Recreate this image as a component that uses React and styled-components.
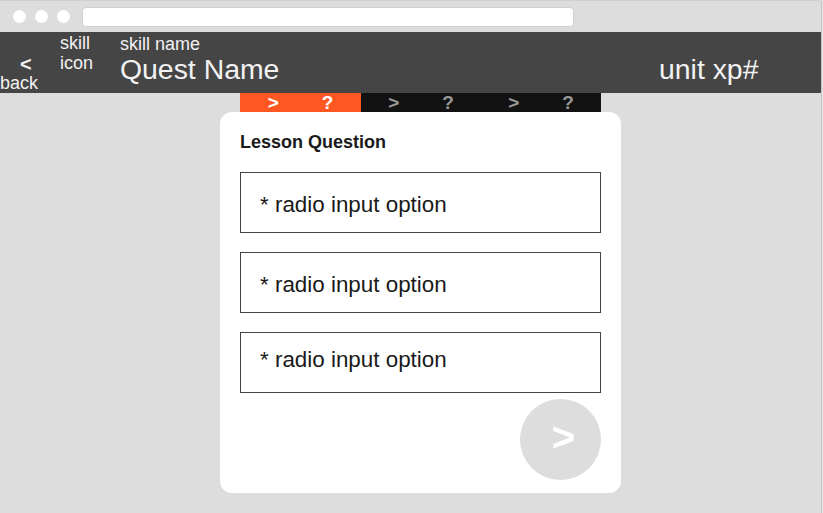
import React from "react";
import styled, { createGlobalStyle } from "styled-components";

const Global = createGlobalStyle`
  html, body { margin: 0; padding: 0; background: #e6e6e6; }
  body { font-family: "Liberation Sans", Arial, sans-serif; }
  * { box-sizing: border-box; }
`;

const Window = styled.div`
  width: 822px;
  height: 513px;
  background: #dddddd;
  border-top: 1px solid #cfcfcf;
  border-right: 1px solid #c4c4c4;
  border-top-right-radius: 3px;
  display: flex;
  flex-direction: column;
  overflow: hidden;
`;

const TitleBar = styled.div`
  height: 31px;
  display: flex;
  align-items: center;
  padding-left: 13px;
  gap: 9px;
`;

const Dot = styled.span`
  width: 13px;
  height: 13px;
  border-radius: 50%;
  background: #ffffff;
`;

const UrlBar = styled.div`
  width: 492px;
  height: 20px;
  margin-left: 3px;
  background: #ffffff;
  border: 1px solid #d0d0d0;
  border-radius: 4px;
`;

const Header = styled.header`
  height: 61px;
  background: #454545;
  color: #f2f2f2;
  display: flex;
  align-items: stretch;
`;

const Back = styled.div`
  width: 60px;
  display: flex;
  flex-direction: column;
  align-items: flex-start;
  justify-content: flex-end;
`;

const BackArrow = styled.span`
  font-size: 20px;
  font-weight: bold;
  line-height: 16px;
  margin-left: 20px;
  margin-bottom: 1px;
`;

const BackLabel = styled.span`
  font-size: 18px;
  line-height: 20px;
`;

const SkillIcon = styled.div`
  width: 60px;
  font-size: 18px;
  line-height: 20px;
  padding-top: 1px;
`;

const Titles = styled.div`
  flex: 1;
  display: flex;
  flex-direction: column;
  padding-top: 2px;
`;

const SkillName = styled.span`
  font-size: 18px;
  line-height: 20px;
`;

const QuestName = styled.span`
  font-size: 28.4px;
  line-height: 30px;
`;

const Xp = styled.div`
  width: 162px;
  font-size: 28.4px;
  line-height: 30px;
  padding-top: 22px;
`;

const Main = styled.main`
  flex: 1;
  display: flex;
  flex-direction: column;
  align-items: center;
  padding-left: 20px;
`;

const Progress = styled.div`
  display: flex;
  width: 361px;
  height: 19px;
`;

const Step = styled.div`
  width: ${(p) => (p.$first ? "121px" : "120px")};
  background: ${(p) => (p.$active ? "#ff5722" : "#121212")};
  color: ${(p) => (p.$active ? "#ffffff" : "#9a9a9a")};
  display: flex;
  justify-content: center;
  gap: 43px;
  font-size: 19px;
  font-weight: bold;
  line-height: 19px;
`;

const Card = styled.section`
  width: 401px;
  height: 381px;
  background: #ffffff;
  border-radius: 12px;
  padding: 20px 20px 13px;
  display: flex;
  flex-direction: column;
`;

const Question = styled.h2`
  margin: 0 0 20px;
  font-size: 18px;
  font-weight: bold;
  line-height: 20px;
  color: #1a1a1a;
`;

const Options = styled.div`
  display: flex;
  flex-direction: column;
  gap: 19px;
`;

const Option = styled.label`
  height: 61px;
  border: 1px solid #444444;
  display: flex;
  align-items: center;
  padding-left: 19px;
  padding-top: ${(p) => (p.$raised ? "0" : "4px")};
  padding-bottom: ${(p) => (p.$raised ? "6px" : "0")};
  font-size: 22.4px;
  color: #1a1a1a;
`;

const Footer = styled.div`
  flex: 1;
  display: flex;
  justify-content: flex-end;
  align-items: flex-end;
`;

const NextButton = styled.button`
  width: 81px;
  height: 81px;
  border-radius: 50%;
  border: none;
  background: #dddddd;
  color: #ffffff;
  font-family: "Liberation Sans", Arial, sans-serif;
  font-size: 40px;
  font-weight: bold;
  padding: 0 0 4px 6px;
  display: flex;
  align-items: center;
  justify-content: center;
`;

const steps = [true, false, false];
const options = [false, false, true];

export default function App() {
  return (
    <>
      <Global />
      <Window>
        <TitleBar>
          <Dot />
          <Dot />
          <Dot />
          <UrlBar />
        </TitleBar>
        <Header>
          <Back>
            <BackArrow>&lt;</BackArrow>
            <BackLabel>back</BackLabel>
          </Back>
          <SkillIcon>
            skill
            <br />
            icon
          </SkillIcon>
          <Titles>
            <SkillName>skill name</SkillName>
            <QuestName>Quest Name</QuestName>
          </Titles>
          <Xp>unit xp#</Xp>
        </Header>
        <Main>
          <Progress>
            {steps.map((active, i) => (
              <Step key={i} $active={active} $first={i === 0}>
                <span>&gt;</span>
                <span>?</span>
              </Step>
            ))}
          </Progress>
          <Card>
            <Question>Lesson Question</Question>
            <Options>
              {options.map((raised, i) => (
                <Option key={i} $raised={raised}>
                  * radio input option
                </Option>
              ))}
            </Options>
            <Footer>
              <NextButton>&gt;</NextButton>
            </Footer>
          </Card>
        </Main>
      </Window>
    </>
  );
}
